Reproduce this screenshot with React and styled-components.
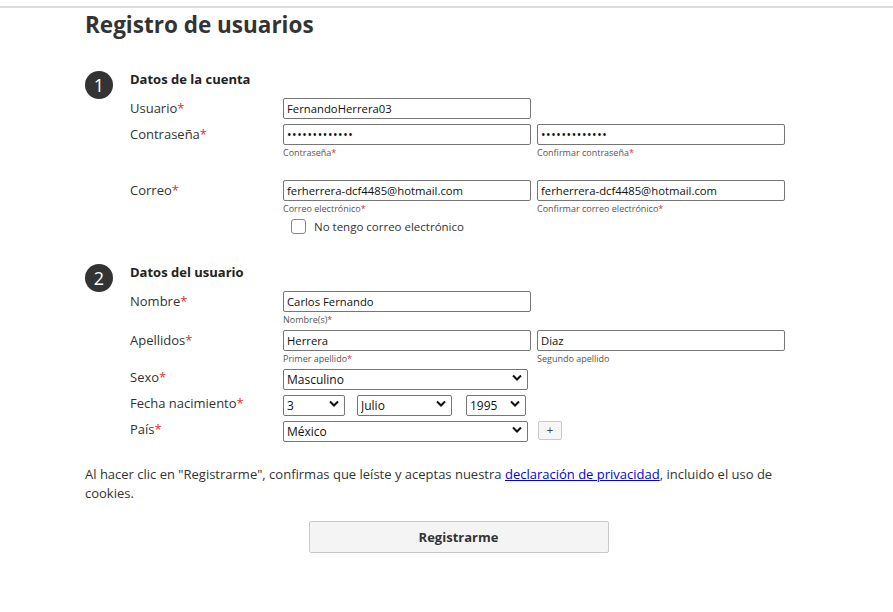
import React from "react";
import styled, { createGlobalStyle } from "styled-components";

const GlobalStyle = createGlobalStyle`
  body {
    margin: 0;
    background: #fff;
    font-family: "Open Sans", "Noto Sans", sans-serif;
    color: #333;
  }
`;

const TopLine = styled.div`
  margin-top: 6px;
  height: 2px;
  background: #dcdcdc;
`;

const Page = styled.div`
  width: 700px;
  margin-left: 85px;
`;

const Title = styled.h1`
  margin: 1px 0 0;
  font-size: 22.5px;
  line-height: 32px;
  font-weight: 700;
  color: #333;
`;

const SectionHead = styled.div`
  display: flex;
  align-items: center;
  gap: 17px;
  margin-top: ${(p) => p.top}px;
  height: 28px;
`;

const Step = styled.div`
  width: 28px;
  height: 28px;
  border-radius: 50%;
  background: #333;
  color: #fff;
  display: flex;
  align-items: center;
  justify-content: center;
  font-size: 18px;
`;

const SectionTitle = styled.h2`
  margin: 0 0 12px;
  font-size: 13px;
  font-weight: 700;
  color: #222;
`;

const Row = styled.div`
  display: grid;
  grid-template-columns: 147px 248px 248px;
  column-gap: 6px;
  padding-left: 45px;
  margin-top: ${(p) => p.top || 0}px;
`;

const Label = styled.div`
  font-size: 13px;
  line-height: 20px;
  color: #333;
`;

const Req = styled.span`
  color: #e0312b;
`;

const Field = styled.div`
  display: flex;
  flex-direction: column;
`;

const Input = styled.input`
  box-sizing: border-box;
  width: 248px;
  height: 21px;
  border: 1px solid #767676;
  border-radius: 2px;
  padding: 0 3px;
  font-family: inherit;
  font-size: 11.3px;
  color: #111;
  outline: none;
`;

const Password = styled(Input)`
  font-size: 12px;
  letter-spacing: 0.6px;
`;

const Hint = styled.div`
  font-size: 9px;
  line-height: 14px;
  margin-top: 1px;
  color: #555;
`;

const CheckRow = styled.label`
  display: flex;
  align-items: center;
  gap: 8px;
  margin: 3px 0 0 8px;
  font-size: 11.5px;
  color: #333;
`;

const Box = styled.span`
  width: 13px;
  height: 13px;
  border: 1px solid #858585;
  border-radius: 3px;
  background: #fff;
`;

const Selects = styled.div`
  grid-column: span 2;
  display: flex;
  align-items: center;
`;

const SelectWrap = styled.div`
  position: relative;
  flex-shrink: 0;
  width: ${(p) => p.w}px;
  height: 21px;
  margin-right: ${(p) => p.mr || 0}px;
`;

const Select = styled.select`
  appearance: none;
  box-sizing: border-box;
  width: 100%;
  height: 21px;
  border: 1px solid #767676;
  border-radius: 2px;
  background: #fff;
  padding: 0 3px;
  font-family: inherit;
  font-size: 12px;
  color: #111;
  outline: none;
`;

const Chevron = styled.svg`
  position: absolute;
  right: 6px;
  top: 7px;
  pointer-events: none;
`;

const PlusButton = styled.button`
  box-sizing: border-box;
  flex-shrink: 0;
  width: 24px;
  height: 19px;
  margin: 2px 0 0 10px;
  border: 1px solid #c8c8c8;
  border-radius: 2px;
  background: #f6f6f6;
  color: #444;
  font-size: 11px;
  line-height: 1;
  padding: 0;
`;

const Notice = styled.p`
  margin: 25px 0 0;
  font-size: 13px;
  line-height: 19px;
  color: #333;
`;

const Link = styled.a`
  color: #0000ee;
  text-decoration: underline;
`;

const SubmitWrap = styled.div`
  display: flex;
  justify-content: center;
  margin-top: 18px;
  padding-left: 47px;
`;

const Submit = styled.button`
  width: 300px;
  height: 32px;
  border: 1px solid #c9c9c9;
  border-radius: 2px;
  background: #f4f4f4;
  font-family: inherit;
  font-size: 13px;
  font-weight: 700;
  color: #333;
`;

function Dropdown({ w, mr, value }) {
  return (
    <SelectWrap w={w} mr={mr}>
      <Select defaultValue={value}>
        <option>{value}</option>
      </Select>
      <Chevron width="10" height="7" viewBox="0 0 10 7">
        <path d="M1 1.5 L5 5.5 L9 1.5" fill="none" stroke="#111" strokeWidth="2" />
      </Chevron>
    </SelectWrap>
  );
}

export default function App() {
  return (
    <>
      <GlobalStyle />
      <TopLine />
      <Page>
        <Title>Registro de usuarios</Title>

        <SectionHead top={30}>
          <Step>1</Step>
          <SectionTitle>Datos de la cuenta</SectionTitle>
        </SectionHead>
        <Row top={-1}>
          <Label>
            Usuario<Req>*</Req>
          </Label>
          <Input defaultValue="FernandoHerrera03" />
        </Row>
        <Row top={5}>
          <Label>
            Contraseña<Req>*</Req>
          </Label>
          <Field>
            <Password type="password" defaultValue="FernandoHer03" />
            <Hint>
              Contraseña<Req>*</Req>
            </Hint>
          </Field>
          <Field>
            <Password type="password" defaultValue="FernandoHer03" />
            <Hint>
              Confirmar contraseña<Req>*</Req>
            </Hint>
          </Field>
        </Row>
        <Row top={20}>
          <Label>
            Correo<Req>*</Req>
          </Label>
          <Field>
            <Input defaultValue="ferherrera-dcf4485@hotmail.com" />
            <Hint>
              Correo electrónico<Req>*</Req>
            </Hint>
            <CheckRow>
              <Box />
              No tengo correo electrónico
            </CheckRow>
          </Field>
          <Field>
            <Input defaultValue="ferherrera-dcf4485@hotmail.com" />
            <Hint>
              Confirmar correo electrónico<Req>*</Req>
            </Hint>
          </Field>
        </Row>

        <SectionHead top={30}>
          <Step>2</Step>
          <SectionTitle>Datos del usuario</SectionTitle>
        </SectionHead>
        <Row top={-1}>
          <Label>
            Nombre<Req>*</Req>
          </Label>
          <Field>
            <Input defaultValue="Carlos Fernando" />
            <Hint>
              Nombre(s)<Req>*</Req>
            </Hint>
          </Field>
        </Row>
        <Row top={3}>
          <Label>
            Apellidos<Req>*</Req>
          </Label>
          <Field>
            <Input defaultValue="Herrera" />
            <Hint>
              Primer apellido<Req>*</Req>
            </Hint>
          </Field>
          <Field>
            <Input defaultValue="Diaz" />
            <Hint>Segundo apellido</Hint>
          </Field>
        </Row>
        <Row top={1}>
          <Label>
            Sexo<Req>*</Req>
          </Label>
          <Selects>
            <Dropdown w={245} value="Masculino" />
          </Selects>
        </Row>
        <Row top={5}>
          <Label>
            Fecha nacimiento<Req>*</Req>
          </Label>
          <Selects>
            <Dropdown w={62} mr={12} value="3" />
            <Dropdown w={95} mr={14} value="Julio" />
            <Dropdown w={60} value="1995" />
          </Selects>
        </Row>
        <Row top={5}>
          <Label>
            País<Req>*</Req>
          </Label>
          <Selects>
            <Dropdown w={245} value="México" />
            <PlusButton>+</PlusButton>
          </Selects>
        </Row>

        <Notice>
          Al hacer clic en "Registrarme", confirmas que leíste y aceptas nuestra{" "}
          <Link href="#">declaración de privacidad</Link>, incluido el uso de
          cookies.
        </Notice>
        <SubmitWrap>
          <Submit>Registrarme</Submit>
        </SubmitWrap>
      </Page>
    </>
  );
}
